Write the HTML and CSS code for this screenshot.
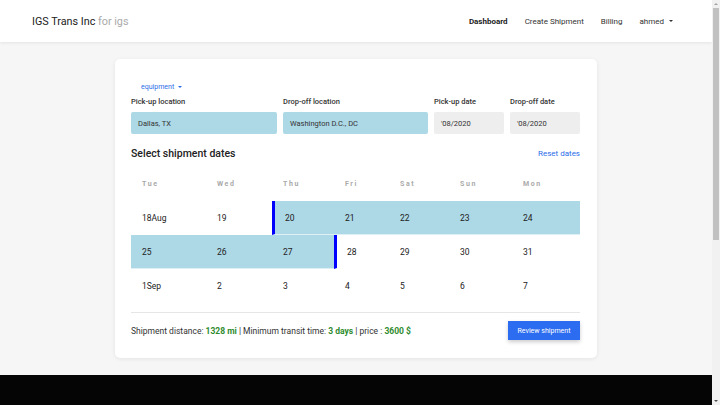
FILE: index.html
```html
<!DOCTYPE html>
<html>
<head>
<meta charset="utf-8">
<link rel="stylesheet" href="styles.css">
</head>
<body>
<header class="navbar">
  <div class="brand">IGS Trans Inc <span class="brand-sub">for igs</span></div>
  <nav class="nav">
    <a class="nav-link active">Dashboard</a>
    <a class="nav-link">Create Shipment</a>
    <a class="nav-link">Billing</a>
    <a class="nav-link dropdown">ahmed <span class="caret"></span></a>
  </nav>
</header>
<main class="main">
  <section class="card">
    <div class="equip"><span>equipment</span><span class="caret small"></span></div>
    <div class="fields">
      <div class="field">
        <label class="label">Pick-up location</label>
        <div class="input loc">Dallas, TX</div>
      </div>
      <div class="field">
        <label class="label">Drop-off location</label>
        <div class="input loc">Washington D.C., DC</div>
      </div>
      <div class="field">
        <label class="label">Pick-up date</label>
        <div class="input date">'08/2020</div>
      </div>
      <div class="field">
        <label class="label">Drop-off date</label>
        <div class="input date">'08/2020</div>
      </div>
    </div>
    <div class="title-row">
      <h2 class="title">Select shipment dates</h2>
      <a class="reset">Reset dates</a>
    </div>
    <div class="calendar">
      <div class="dow">Tue</div><div class="dow">Wed</div><div class="dow">Thu</div><div class="dow">Fri</div><div class="dow">Sat</div><div class="dow">Sun</div><div class="dow">Mon</div>
      <div class="day">18Aug</div><div class="day">19</div><div class="day sel mark">20</div><div class="day sel">21</div><div class="day sel">22</div><div class="day sel">23</div><div class="day sel">24</div>
      <div class="day sel">25</div><div class="day sel">26</div><div class="day sel">27</div><div class="day mark">28</div><div class="day">29</div><div class="day">30</div><div class="day">31</div>
      <div class="day">1Sep</div><div class="day">2</div><div class="day">3</div><div class="day">4</div><div class="day">5</div><div class="day">6</div><div class="day">7</div>
    </div>
    <div class="summary">
      <p class="info">Shipment distance: <b>1328 mi</b> | Minimum transit time: <b>3 days</b> | price : <b>3600 $</b></p>
      <button class="btn">Review shipment</button>
    </div>
  </section>
</main>
<footer class="footer"></footer>
<div class="scrollbar">
  <span class="sb-arrow up"></span>
  <span class="sb-thumb"></span>
  <span class="sb-arrow down"></span>
</div>
</body>
</html>
```
FILE: styles.css
```css
html, body { margin: 0; padding: 0; }
body {
  font-family: Roboto, "Liberation Sans", sans-serif;
  background: #f6f6f6;
  color: #212121;
  padding-right: 8px;
}
.navbar {
  height: 42px;
  background: #fff;
  display: flex;
  align-items: center;
  justify-content: space-between;
  padding: 0 39px 0 32px;
  box-shadow: 0 1px 3px rgba(0,0,0,0.08);
  position: relative;
}
.brand { font-size: 10.8px; color: #222; }
.brand-sub { color: #aaa; }
.nav { display: flex; gap: 17px; align-items: center; }
.nav-link { font-size: 8px; color: #333; }
.nav-link.active { font-weight: 700; color: #222; }
.caret {
  display: inline-block;
  width: 0; height: 0;
  border-left: 2.5px solid transparent;
  border-right: 2.5px solid transparent;
  border-top: 2.5px solid #333;
  vertical-align: middle;
  margin-left: 3px;
}
.caret.small { border-top-color: #2a6de8; margin-left: 4px; }
.main { padding: 17px 0 17px; display: flex; justify-content: center; }
.card {
  width: 449px;
  background: #fff;
  border-radius: 5px;
  box-shadow: 0 1px 4px rgba(0,0,0,0.08);
  padding: 22px 17px 18px 16px;
}
.equip {
  font-size: 7px;
  color: #2a6de8;
  padding-left: 10px;
  height: 10px;
  display: flex;
  align-items: center;
  margin-top: 1px;
}
.fields {
  display: grid;
  grid-template-columns: 146px 145px 70px 70px;
  gap: 6px;
  margin-top: 5px;
}
.field { display: flex; flex-direction: column; }
.label { font-size: 7.5px; font-weight: 500; color: #333; height: 10px; margin-bottom: 5px; }
.input {
  height: 22px;
  border-radius: 2px;
  font-size: 7.5px;
  color: #333;
  display: flex;
  align-items: center;
  padding-left: 7px;
}
.input.loc { background: #add8e6; }
.input.date { background: #eeeeee; padding-left: 7px; }
.title-row {
  display: flex;
  justify-content: space-between;
  align-items: center;
  margin-top: 13px;
}
.title { font-size: 10.5px; font-weight: 500; margin: 0; color: #222; }
.reset { font-size: 8px; color: #2a6de8; }
.calendar {
  display: grid;
  grid-template-columns: 75px 66px 62px 55px 60px 63px 68px;
  grid-auto-rows: 34px;
  margin-top: 7px;
}
.dow {
  font-size: 7px;
  font-weight: 700;
  color: #aaa;
  letter-spacing: 1.6px;
  padding-left: 11px;
  display: flex;
  align-items: center;
}
.day {
  font-size: 8.5px;
  color: #222;
  padding-left: 11px;
  display: flex;
  align-items: center;
  border-bottom: 1px solid rgba(255,255,255,0.6);
  box-sizing: border-box;
}
.day.sel { background: #add8e6; }
.day.mark { border-left: 3px solid #0000ff; padding-left: 10px; }
.summary {
  border-top: 1px solid #e6e6e6;
  margin-top: 9px;
  padding-top: 8px;
  display: flex;
  justify-content: space-between;
  align-items: center;
}
.info { font-size: 8.5px; color: #333; margin: 0; }
.info b { color: #2e8b2e; font-weight: 700; }
.btn {
  font-family: Roboto, "Liberation Sans", sans-serif;
  background: #2b6cf0;
  color: #fff;
  border: none;
  font-size: 7px;
  height: 19px;
  width: 72px;
  padding: 0;
  box-shadow: 0 2px 4px rgba(0,0,0,0.2);
}
.footer { background: #050505; height: 300px; }
.scrollbar {
  position: fixed;
  top: 0;
  right: 0;
  width: 8px;
  height: 100vh;
  background: #f1f1f1;
}
.sb-thumb {
  position: absolute;
  top: 8px;
  left: 1px;
  width: 6px;
  height: 232px;
  background: #c1c1c1;
}
.sb-arrow {
  position: absolute;
  left: 2px;
  width: 0; height: 0;
  border-left: 2px solid transparent;
  border-right: 2px solid transparent;
}
.sb-arrow.up { top: 3px; border-bottom: 2px solid #a3a3a3; }
.sb-arrow.down { bottom: 3px; border-top: 2px solid #505050; }
```
